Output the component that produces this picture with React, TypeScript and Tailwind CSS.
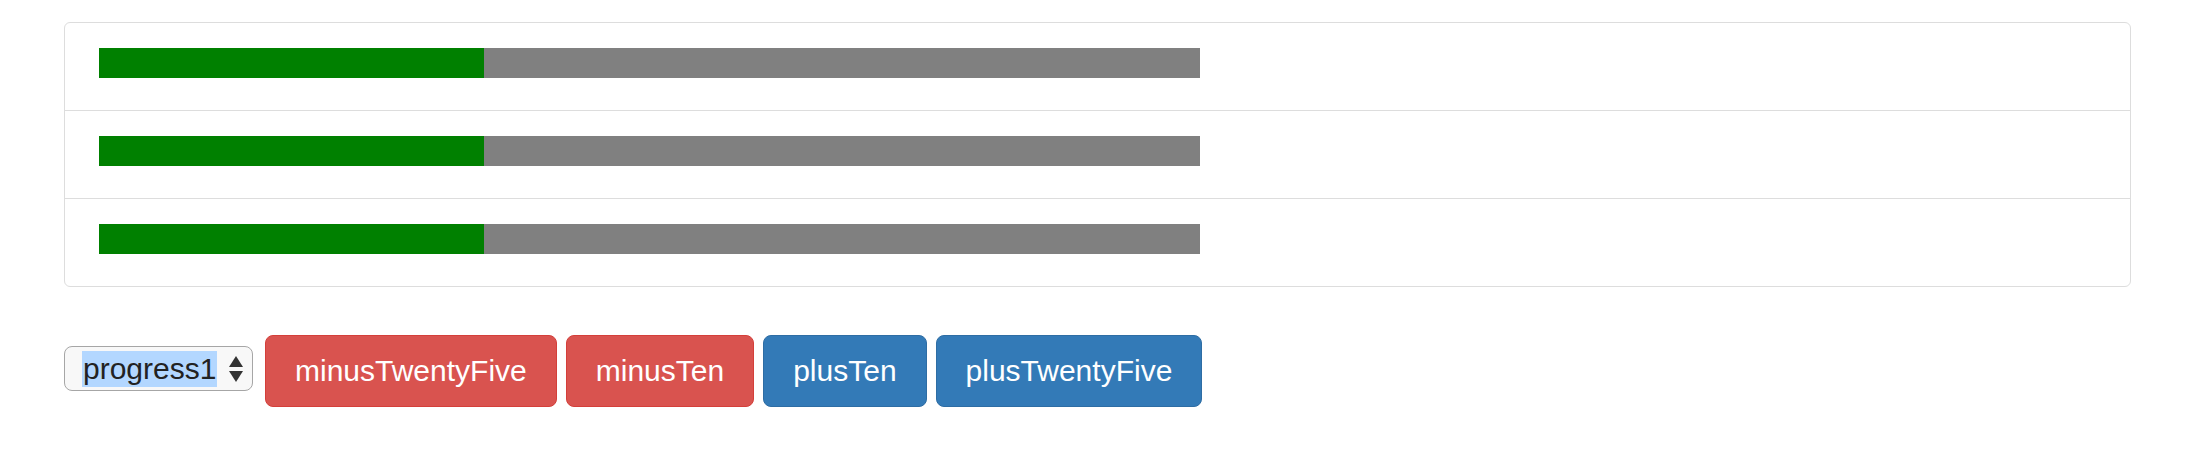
import React, { useState } from "react";

const bars = [35, 35, 35];

const buttons = [
  { label: "minusTwentyFive", tone: "red" },
  { label: "minusTen", tone: "red" },
  { label: "plusTen", tone: "blue" },
  { label: "plusTwentyFive", tone: "blue" },
];

const App = () => {
  const [selected] = useState("progress1");

  return (
    <div
      className="min-h-screen bg-white text-[#333] pl-[64px] pr-[65px] pt-[22px]"
      style={{ fontFamily: '"Liberation Sans", Arial, sans-serif' }}
    >
      <div className="border border-[#ddd] rounded-[6px] flex flex-col">
        {bars.map((value, i) => (
          <div
            key={i}
            className={
              "pl-[34px] pt-[25px] pb-[32px] " +
              (i > 0 ? "border-t border-[#ddd]" : "")
            }
          >
            <div className="w-[1101px] h-[30px] bg-[#808080] flex">
              <div className="h-full bg-[#008000]" style={{ width: value + "%" }} />
            </div>
          </div>
        ))}
      </div>

      <div className="flex items-start mt-[48px]">
        <div className="mt-[11px] h-[45px] w-[189px] border border-[#a6a6a6] rounded-[8px] bg-[#f8f8f8] flex items-center pl-[17px] pr-[9px]">
          <span className="bg-[#b3d7ff] text-[30px] leading-[36px] px-[1px] text-[#222]">
            {selected}
          </span>
          <div className="ml-auto flex flex-col items-center gap-[4px]">
            <svg width="14" height="11" viewBox="0 0 14 11">
              <polygon points="7,0 14,11 0,11" fill="#333" />
            </svg>
            <svg width="14" height="11" viewBox="0 0 14 11">
              <polygon points="0,0 14,0 7,11" fill="#333" />
            </svg>
          </div>
        </div>

        <div className="flex gap-[9px] ml-[12px]">
          {buttons.map((b) => (
            <button
              key={b.label}
              className={
                "text-white text-[30px] leading-[42px] px-[29px] py-[14px] rounded-[8px] border " +
                (b.tone === "red"
                  ? "bg-[#d9534f] border-[#d43f3a]"
                  : "bg-[#337ab7] border-[#2e6da4]")
              }
            >
              {b.label}
            </button>
          ))}
        </div>
      </div>
    </div>
  );
};

export default App;
